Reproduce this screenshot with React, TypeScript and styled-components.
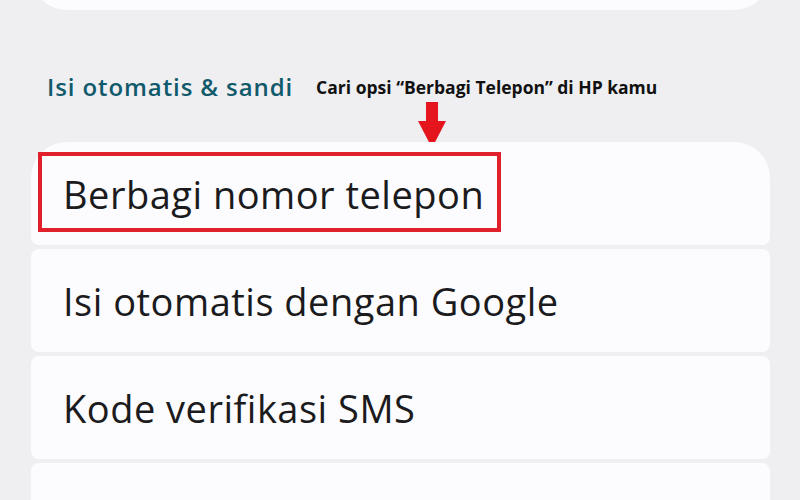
import React from 'react';
import styled, { createGlobalStyle } from 'styled-components';

const GlobalStyle = createGlobalStyle`
  html, body {
    margin: 0;
    padding: 0;
    background: #efeff2;
    overflow: hidden;
  }
`;

const items = [
  { label: 'Berbagi nomor telepon', highlight: true },
  { label: 'Isi otomatis dengan Google' },
  { label: 'Kode verifikasi SMS' },
  { label: '' }
];

export default function App() {
  return (
    <>
      <GlobalStyle />
      <Page>
        <TopCard />
        <SectionHeader>
          <SectionTitle>Isi otomatis &amp; sandi</SectionTitle>
          <Note>Cari opsi “Berbagi Telepon” di HP kamu</Note>
          <Arrow width="30" height="48" viewBox="0 0 30 48">
            <path d="M9 0 H21 V19 H29 L15 46 L1 19 H9 Z" fill="#e4151d" />
          </Arrow>
        </SectionHeader>
        <List>
          {items.map((item, i) => (
            <Row key={i} first={i === 0}>
              <RowLabel>{item.label}</RowLabel>
              {item.highlight && <Highlight />}
            </Row>
          ))}
        </List>
      </Page>
    </>
  );
}

const Page = styled.div`
  width: 800px;
  height: 500px;
  padding: 0 30px 0 31px;
  box-sizing: border-box;
  display: flex;
  flex-direction: column;
  overflow: hidden;
`;

const TopCard = styled.div`
  margin-top: -40px;
  height: 50px;
  flex-shrink: 0;
  background: #fcfcfe;
  border-radius: 0 0 36px 36px;
`;

const SectionHeader = styled.div`
  position: relative;
  height: 132px;
  flex-shrink: 0;
  display: flex;
  align-items: center;
  padding: 21px 0 0 16px;
  box-sizing: border-box;
  gap: 23px;
`;

const SectionTitle = styled.h2`
  margin: 0;
  font-family: 'Open Sans', 'Noto Sans', sans-serif;
  font-weight: 600;
  font-size: 24px;
  letter-spacing: 0.9px;
  color: #115a6b;
`;

const Note = styled.span`
  font-family: 'Open Sans', sans-serif;
  font-weight: 700;
  font-size: 17.5px;
  color: #111;
`;

const Arrow = styled.svg`
  position: absolute;
  left: 386px;
  top: 92px;
`;

const List = styled.div`
  display: flex;
  flex-direction: column;
  gap: 4px;
`;

const Row = styled.div<{ first?: boolean }>`
  position: relative;
  height: 103px;
  flex-shrink: 0;
  display: flex;
  align-items: center;
  padding-left: 32px;
  background: #fcfcfe;
  border-radius: ${p => (p.first ? '36px 36px 8px 8px' : '8px')};
`;

const RowLabel = styled.span`
  font-family: 'Open Sans', 'Noto Sans', sans-serif;
  font-size: 38px;
  letter-spacing: 0.5px;
  color: #1b1b1d;
`;

const Highlight = styled.div`
  position: absolute;
  left: 7px;
  top: 10px;
  width: 463px;
  height: 80px;
  box-sizing: border-box;
  border: 4px solid #e0202a;
`;
